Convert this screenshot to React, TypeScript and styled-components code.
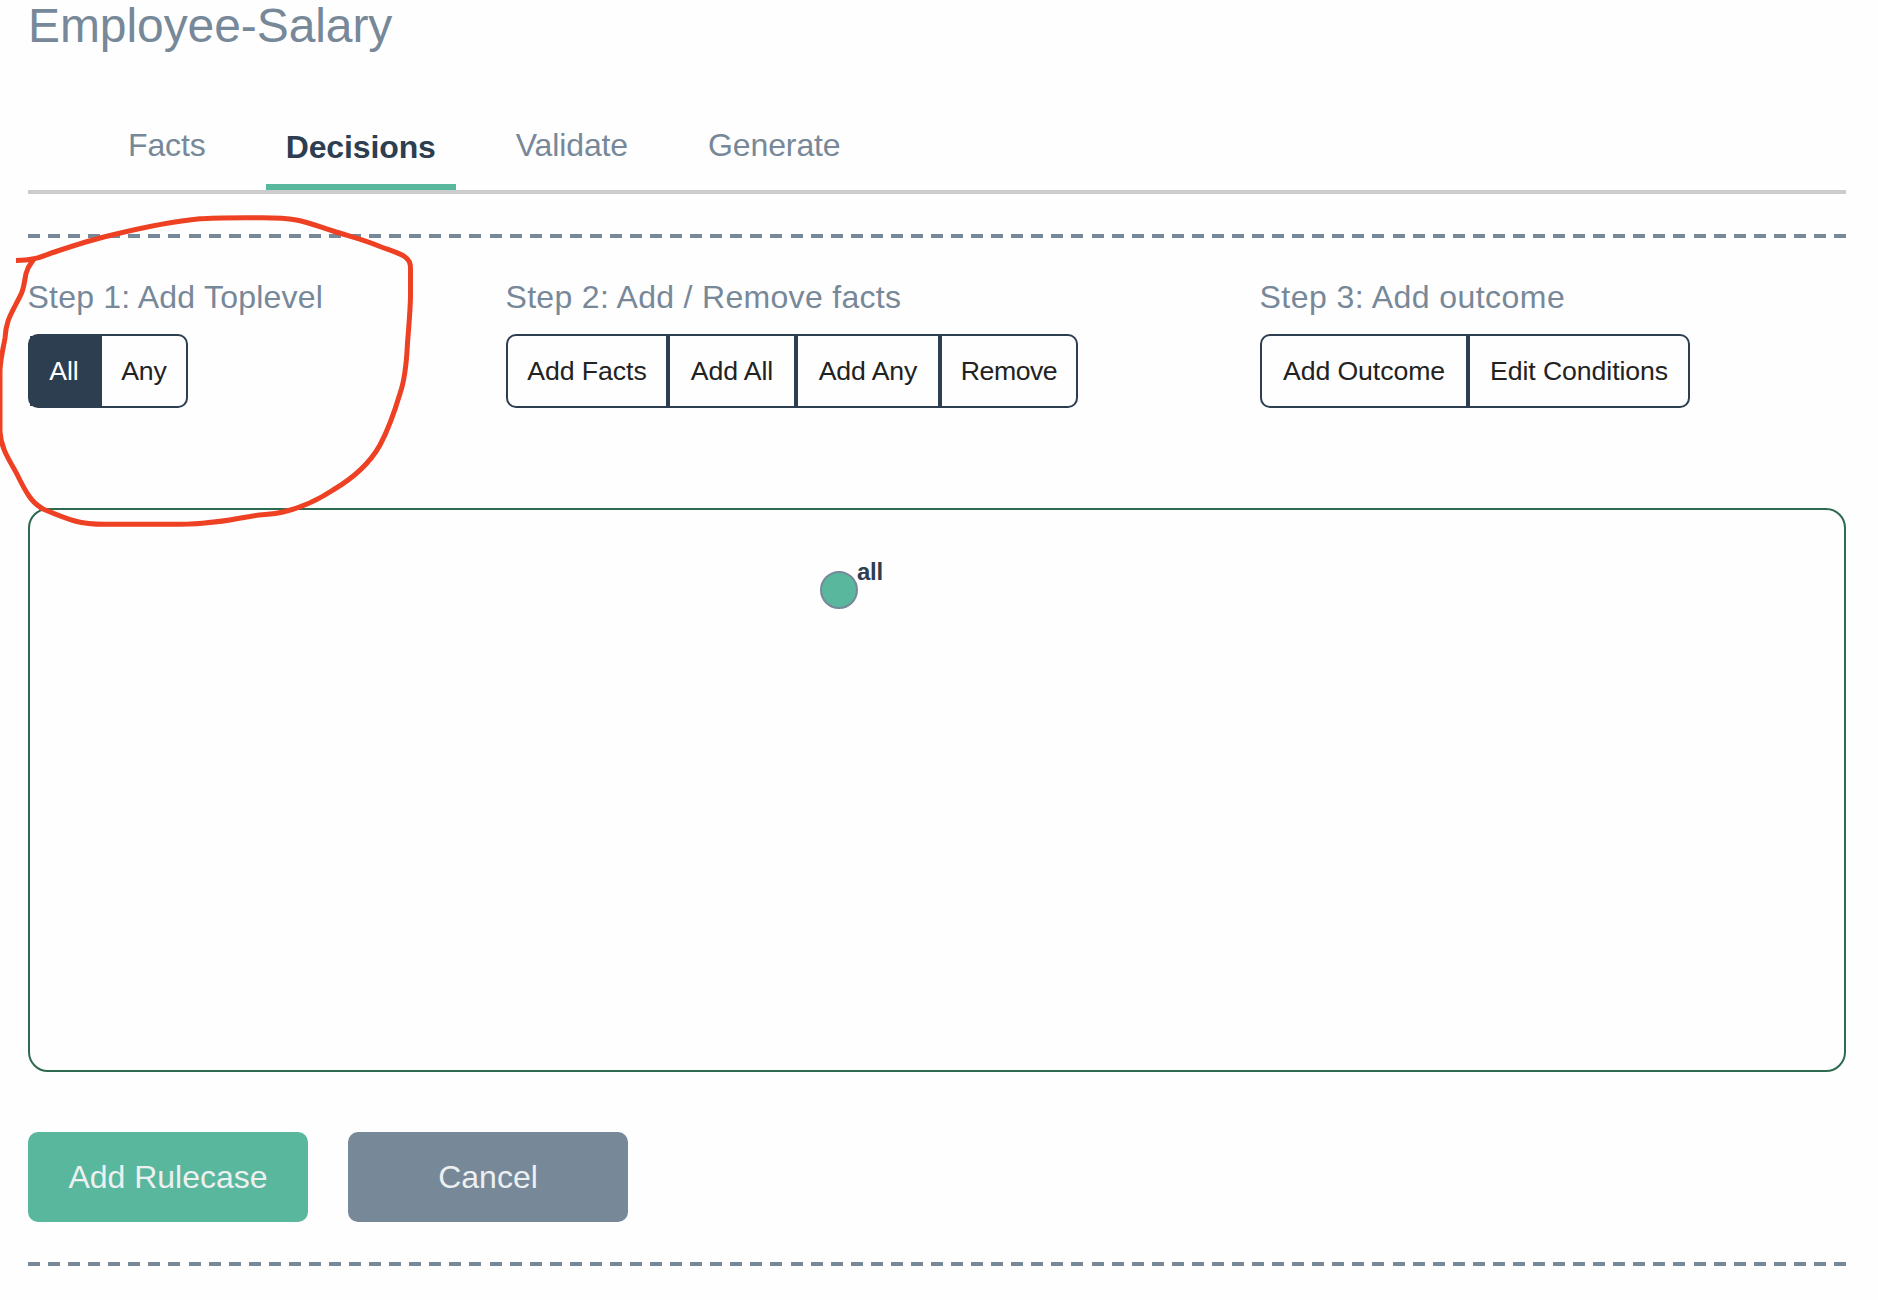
import React, { useState } from "react";
import styled, { createGlobalStyle } from "styled-components";

const color = {
  slate: "#778899",
  navy: "#2c3e50",
  green: "#59b79d",
  forest: "#2d6a4f",
  rule: "#cccccc",
  ink: "#222222",
  pale: "#ecf0f1",
  marker: "#ee4023",
};

const GlobalStyle = createGlobalStyle`
  *, *::before, *::after { box-sizing: border-box; }
  body {
    margin: 0;
    background: #fefefe;
    font-family: "Liberation Sans", Arial, Helvetica, sans-serif;
    overflow: hidden;
  }
`;

const Page = styled.main`
  position: relative;
  display: flex;
  flex-direction: column;
  height: 1300px;
  padding: 0 32px 0 28px;
`;

const Title = styled.h1`
  margin: 0;
  font-size: 48px;
  line-height: 51px;
  font-weight: 400;
  letter-spacing: -0.08px;
  color: ${color.slate};
`;

const Tabs = styled.nav`
  display: flex;
  align-items: flex-end;
  gap: 40px;
  height: 94px;
  margin-top: 49px;
  padding-left: 80px;
  border-bottom: 4px solid ${color.rule};
`;

const Tab = styled.a<{ $active?: boolean }>`
  padding: 0 20px ${(p) => (p.$active ? 17 : 25)}px;
  border-bottom: ${(p) => (p.$active ? `6px solid ${color.green}` : "0")};
  font-size: 32px;
  line-height: 40px;
  font-weight: ${(p) => (p.$active ? 700 : 400)};
  letter-spacing: -0.12px;
  color: ${(p) => (p.$active ? color.navy : color.slate)};
  cursor: pointer;
`;

const DashedRule = styled.div`
  flex: none;
  height: 4px;
  margin-top: 40px;
  background: repeating-linear-gradient(
    90deg,
    ${color.slate} 0 12px,
    transparent 12px 20.0667px
  );
`;

const Steps = styled.section`
  display: grid;
  grid-template-columns: 478px 754px 1fr;
  margin-top: 39px;
`;

const StepTitle = styled.h2<{ $tracking: number }>`
  margin: 0 0 17px;
  font-size: 32px;
  line-height: 40px;
  font-weight: 400;
  letter-spacing: ${(p) => p.$tracking}px;
  text-indent: -0.5px;
  color: ${color.slate};
`;

const ButtonGroup = styled.div`
  display: inline-flex;
  height: 74px;
  border: 2px solid ${color.navy};
  border-radius: 10px;
`;

const GroupButton = styled.button<{ $width: number; $active?: boolean; $tracking?: number }>`
  width: ${(p) => p.$width}px;
  padding: 0 0 1px;
  border: 0;
  border-right: 4px solid ${color.navy};
  background: ${(p) => (p.$active ? color.navy : "transparent")};
  font: 400 26.667px/40px "Liberation Sans", Arial, sans-serif;
  letter-spacing: ${(p) => p.$tracking ?? -0.08}px;
  color: ${(p) => (p.$active ? "#ffffff" : color.ink)};
  white-space: nowrap;

  &:last-child {
    border-right: 0;
  }
`;

const TreePanel = styled.section`
  flex: none;
  height: 564px;
  margin-top: 100px;
  border: 2px solid ${color.forest};
  border-radius: 20px;
`;

const TreeCanvas = styled.svg`
  display: block;
  width: 100%;
  height: 100%;
`;

const NodeLabel = styled.text`
  font-size: 24px;
  font-weight: 700;
  letter-spacing: -0.3px;
  fill: ${color.navy};
`;

const Actions = styled.div`
  display: flex;
  gap: 40px;
  margin-top: 60px;
`;

const ActionButton = styled.button<{ $tone: string }>`
  width: 280px;
  height: 90px;
  padding: 0;
  border: 0;
  border-radius: 10px;
  background: ${(p) => p.$tone};
  font: 400 32px/40px "Liberation Sans", Arial, sans-serif;
  color: ${color.pale};
`;

const Annotation = styled.svg`
  position: absolute;
  top: 0;
  left: 0;
  width: 440px;
  height: 540px;
  pointer-events: none;
`;

const markerStroke = `
  M16 260.5 C36 260.5 42 256 56 251.5
  C80 243.5 95 239 110 235.5
  C145 227 175 221 200 218.8
  C215 217.3 245 217.7 262 217.7
  C300 217.7 305 222 333 231
  C350 236.5 362 239 380 246.5
  C392 251 397 252.5 403 255.5
  C410 260 410.5 263 410.5 270
  L410.5 295
  C410.5 305 409 325 407.5 343
  C406.5 365 403 385 400 393.5
  C393 417 387 432 380 445
  C370 463 355 477 333 490
  C318 500 300 508 283 512
  C270 515 262 514 250 516.5
  C225 521 205 524.3 180 524.3
  L105 524.3
  C80 524.3 70 520.5 43 509
  C36 505 33 502 29 496
  C22 486 18 475 13 467
  C8 458 1 447 0 432
  L0 370
  C1 355 4 345 5 338
  C6 322 10 316 16 304
  C22 293 23 291 25 279
  C26 270 29 266 34 259
`;

const tabs = ["Facts", "Decisions", "Validate", "Generate"];

export default function App() {
  const [tab, setTab] = useState("Decisions");

  return (
    <>
      <GlobalStyle />
      <Page>
        <Title>Employee-Salary</Title>
        <Tabs>
          {tabs.map((name) => (
            <Tab key={name} $active={name === tab} onClick={() => setTab(name)}>
              {name}
            </Tab>
          ))}
        </Tabs>
        <DashedRule />
        <Steps>
          <div>
            <StepTitle $tracking={0.22}>Step 1: Add Toplevel</StepTitle>
            <ButtonGroup>
              <GroupButton $width={72} $active>All</GroupButton>
              <GroupButton $width={84}>Any</GroupButton>
            </ButtonGroup>
          </div>
          <div>
            <StepTitle $tracking={0.31}>Step 2: Add / Remove facts</StepTitle>
            <ButtonGroup>
              <GroupButton $width={162}>Add Facts</GroupButton>
              <GroupButton $width={128}>Add All</GroupButton>
              <GroupButton $width={144}>Add Any</GroupButton>
              <GroupButton $width={134} $tracking={-0.5}>Remove</GroupButton>
            </ButtonGroup>
          </div>
          <div>
            <StepTitle $tracking={0.45}>Step 3: Add outcome</StepTitle>
            <ButtonGroup>
              <GroupButton $width={208}>Add Outcome</GroupButton>
              <GroupButton $width={218}>Edit Conditions</GroupButton>
            </ButtonGroup>
          </div>
        </Steps>
        <TreePanel>
          <TreeCanvas>
            <circle cx="809" cy="80" r="18" fill={color.green} stroke={color.slate} strokeWidth="2" />
            <NodeLabel x="827" y="70">all</NodeLabel>
          </TreeCanvas>
        </TreePanel>
        <Actions>
          <ActionButton $tone={color.green}>Add Rulecase</ActionButton>
          <ActionButton $tone={color.slate}>Cancel</ActionButton>
        </Actions>
        <DashedRule />
        <Annotation viewBox="0 0 440 540">
          <path d={markerStroke} fill="none" stroke={color.marker} strokeWidth="5" strokeLinejoin="round" />
        </Annotation>
      </Page>
    </>
  );
}
